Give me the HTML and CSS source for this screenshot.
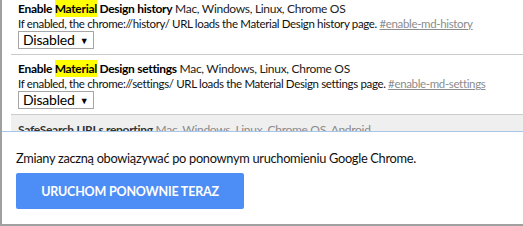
FILE: index.html
```html
<!DOCTYPE html>
<html>
<head>
<meta charset="utf-8">
<link rel="stylesheet" href="styles.css">
</head>
<body>
<div class="frame">
  <div class="list-area">
    <div class="list">
      <div class="exp">
        <div class="exp-title"><b>Enable <mark>Material</mark> Design history</b> <span class="platforms">Mac, Windows, Linux, Chrome OS</span></div>
        <div class="exp-desc">If enabled, the chrome://history/ URL loads the Material Design history page. <a class="exp-link">#enable-md-history</a></div>
        <div class="select"><span>Disabled</span><span class="arrow">▼</span></div>
      </div>
      <div class="exp">
        <div class="exp-title"><b>Enable <mark>Material</mark> Design settings</b> <span class="platforms">Mac, Windows, Linux, Chrome OS</span></div>
        <div class="exp-desc">If enabled, the chrome://settings/ URL loads the Material Design settings page. <a class="exp-link">#enable-md-settings</a></div>
        <div class="select"><span>Disabled</span><span class="arrow">▼</span></div>
      </div>
      <div class="exp exp-muted">
        <div class="exp-title"><b>SafeSearch URLs reporting</b> <span class="platforms">Mac, Windows, Linux, Chrome OS, Android</span></div>
      </div>
    </div>
  </div>
  <div class="panel">
    <p class="panel-text">Zmiany zaczną obowiązywać po ponownym uruchomieniu Google Chrome.</p>
    <button class="relaunch">URUCHOM PONOWNIE TERAZ</button>
  </div>
</div>
</body>
</html>
```

FILE: styles.css
```css
html, body {
  margin: 0;
  padding: 0;
  background: #fff;
}

.frame {
  width: 521px;
  height: 224px;
  border-left: 2px solid #a0a0a0;
  border-bottom: 2px solid #a0a0a0;
  display: flex;
  flex-direction: column;
  overflow: hidden;
  font-family: Lato, "Liberation Sans", Arial, sans-serif;
  color: #000;
}

.list-area {
  height: 131px;
  overflow: hidden;
  flex: none;
}

.list {
  margin-top: -5px;
  margin-left: 9px;
}

.exp {
  padding: 6px 0 5px 7px;
  border-bottom: 1px solid #cbcbcb;
}

.exp-title {
  font-size: 12px;
  line-height: 15px;
  letter-spacing: -0.3px;
  white-space: nowrap;
}

.exp-title b {
  font-weight: bold;
}

mark {
  background: #ffff00;
  color: inherit;
  padding: 1px 0;
}

.platforms {
  color: #222;
}

.exp-desc {
  font-size: 11.5px;
  line-height: 15px;
  letter-spacing: -0.35px;
  white-space: nowrap;
  color: #111;
}

.exp-link {
  color: #8c8c8c;
  text-decoration: underline;
}

.select {
  display: flex;
  align-items: center;
  gap: 5px;
  box-sizing: border-box;
  width: 76px;
  height: 18px;
  border: 1px solid #a6a6a6;
  padding-left: 4px;
  font-size: 14px;
  letter-spacing: -0.2px;
  line-height: 16px;
  background: #fff;
}

.select .arrow {
  font-size: 9px;
  line-height: 9px;
  letter-spacing: 0;
}

.exp-muted {
  background: #efefef;
  padding-top: 7px;
  height: 40px;
}

.exp-muted .exp-title b {
  color: #333;
}

.exp-muted .platforms {
  color: #8a8a8a;
}

.panel {
  flex: 1;
  border-top: 1px solid #a9c6e8;
  background: #fff;
  padding: 0 0 0 14px;
}

.panel-text {
  margin: 17px 0 0;
  font-size: 12.8px;
  letter-spacing: -0.3px;
  line-height: 18px;
  color: #111;
}

.relaunch {
  margin-top: 6px;
  width: 228px;
  height: 36px;
  border: none;
  border-radius: 2px;
  background: #4d8ef6;
  color: #fff;
  font-family: Lato, "Liberation Sans", Arial, sans-serif;
  font-weight: bold;
  font-size: 12.5px;
  letter-spacing: -0.2px;
  padding: 0;
}
```
